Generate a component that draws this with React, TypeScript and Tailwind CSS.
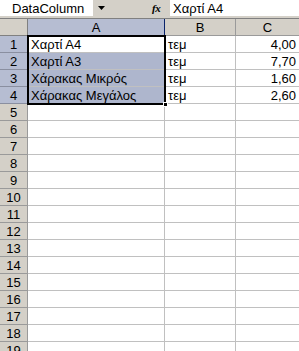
import React from "react";

const data: Record<number, [string, string, string]> = {
  1: ["Χαρτί Α4", "τεμ", "4,00"],
  2: ["Χαρτί Α3", "τεμ", "7,70"],
  3: ["Χάρακας Μικρός", "τεμ", "1,60"],
  4: ["Χάρακας Μεγάλος", "τεμ", "2,60"],
};

export default function App() {
  const rows = Array.from({ length: 20 }, (_, i) => i + 1);
  return (
    <div
      className="w-[299px] h-[351px] overflow-hidden bg-[#d4d0c8] relative text-[13px] leading-none text-black"
      style={{ fontFamily: '"Liberation Sans", Arial, sans-serif' }}
    >
      {/* top bar */}
      <div className="flex h-[18px] items-start">
        <div className="w-[93px] h-[16px] bg-white flex items-center pl-[12px]">DataColumn</div>
        <div className="w-[17px] h-[16px] flex items-center justify-center">
          <svg width="7" height="4" viewBox="0 0 7 4">
            <polygon points="0,0 7,0 3.5,4" fill="#000" />
          </svg>
        </div>
        <div className="w-[60px] h-[16px] flex items-center pl-[42px]">
          <span
            className="italic font-bold text-[11px] tracking-[-0.5px]"
            style={{ fontFamily: '"Liberation Serif", "Times New Roman", serif' }}
          >
            fx
          </span>
        </div>
        <div className="flex-1 h-[16px] bg-white flex items-center pl-[3px]">Χαρτί Α4</div>
      </div>

      {/* header row */}
      <div className="flex h-[18px] border-t border-[#808080]">
        <div className="w-[28px] h-[17px] bg-[#d4d0c8] border-r border-b border-[#808080]" />
        <div className="w-[137px] h-[17px] bg-[#b6bdd2] border-r border-b border-[#0a246a] flex items-center justify-center">
          A
        </div>
        <div className="w-[71px] h-[17px] bg-[#d4d0c8] border-r border-b border-[#9a9a9a] flex items-center justify-center">
          B
        </div>
        <div className="flex-1 h-[17px] bg-[#d4d0c8] border-b border-[#9a9a9a] flex items-center justify-center">
          C
        </div>
      </div>

      {/* rows */}
      {rows.map((r) => {
        const d = data[r];
        const sel = r <= 4;
        return (
          <div key={r} className="flex h-[17px]">
            <div
              className={
                sel
                  ? "w-[28px] h-[17px] bg-[#b6bdd2] border-r border-b border-r-[#0a246a] border-b-[#8a8fa0] flex items-center justify-center"
                  : "w-[28px] h-[17px] bg-[#d4d0c8] border-r border-b border-[#9a9a9a] flex items-center justify-center"
              }
            >
              {r}
            </div>
            <div
              className={
                (r === 1 ? "bg-white " : sel ? "bg-[#aeb6cd] " : "bg-white ") +
                "w-[137px] h-[17px] border-r border-b border-[#c0c0c0] flex items-center pl-[3px] whitespace-nowrap overflow-visible"
              }
            >
              {d ? d[0] : ""}
            </div>
            <div className="w-[71px] h-[17px] bg-white border-r border-b border-[#c0c0c0] flex items-center pl-[3px]">
              {d ? d[1] : ""}
            </div>
            <div className="flex-1 h-[17px] bg-white border-b border-[#c0c0c0] flex items-center justify-end pr-[3px]">
              {d ? d[2] : ""}
            </div>
          </div>
        );
      })}

      {/* selection border over A1:A4 */}
      <div className="absolute left-[27px] top-[35px] w-[139px] h-[70px] border-2 border-black pointer-events-none" />
      <div className="absolute left-[163px] top-[102px] w-[5px] h-[5px] bg-black border border-white pointer-events-none" />
    </div>
  );
}
